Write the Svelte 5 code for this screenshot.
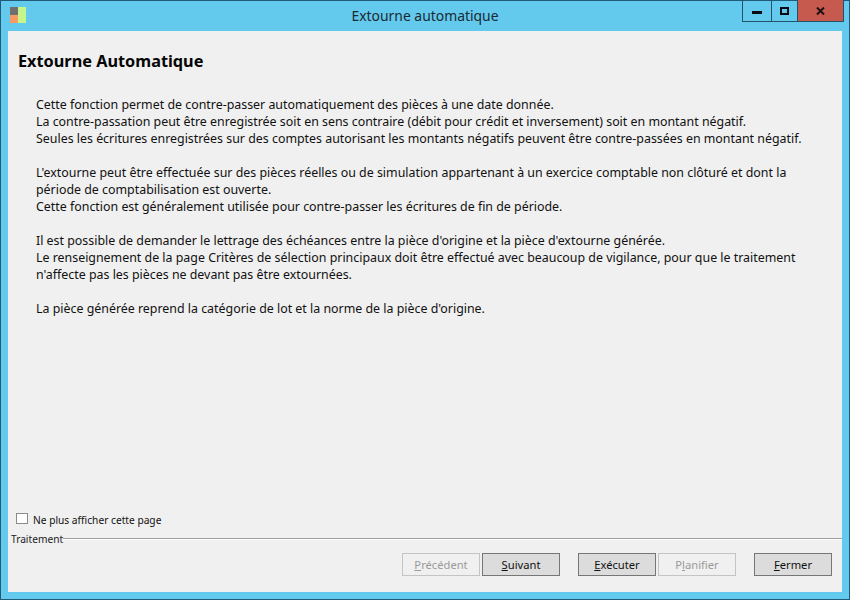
<script>
  const paragraphs = [
    [
      "Cette fonction permet de contre-passer automatiquement des pièces à une date donnée.",
      "La contre-passation peut être enregistrée soit en sens contraire (débit pour crédit et inversement) soit en montant négatif.",
      "Seules les écritures enregistrées sur des comptes autorisant les montants négatifs peuvent être contre-passées en montant négatif."
    ],
    [
      "L'extourne peut être effectuée sur des pièces réelles ou de simulation appartenant à un exercice comptable non clôturé et dont la",
      "période de comptabilisation est ouverte.",
      "Cette fonction est généralement utilisée pour contre-passer les écritures de fin de période."
    ],
    [
      "Il est possible de demander le lettrage des échéances entre la pièce d'origine et la pièce d'extourne générée.",
      "Le renseignement de la page Critères de sélection principaux doit être effectué avec beaucoup de vigilance, pour que le traitement",
      "n'affecte pas les pièces ne devant pas être extournées."
    ],
    ["La pièce générée reprend la catégorie de lot et la norme de la pièce d'origine."]
  ];
</script>

<div class="window">
  <header class="titlebar">
    <div class="appicon">
      <span class="grey"></span>
      <span class="green"></span>
      <span class="orange"></span>
    </div>
    <div class="title">Extourne automatique</div>
    <div class="controls">
      <div class="ctl min"><svg width="10" height="3"><rect width="10" height="3" fill="#0a0a14" /></svg></div>
      <div class="ctl max"><svg width="9" height="8"><rect x="1" y="1" width="7" height="6" fill="none" stroke="#0a0a14" stroke-width="2" /></svg></div>
      <div class="ctl close">
        <svg width="9" height="8" viewBox="0 0 9 8"><path d="M1 0.5 L8 7.5 M8 0.5 L1 7.5" stroke="#1c1010" stroke-width="2" fill="none" /></svg>
      </div>
    </div>
  </header>

  <main class="client">
    <section class="page">
      <h1>Extourne Automatique</h1>
      <div class="body">
        {#each paragraphs as lines}
          <p>
            {#each lines as line}
              <span class="line">{line}</span>
            {/each}
          </p>
        {/each}
      </div>
    </section>

    <label class="dontshow">
      <span class="box"></span>
      <span>Ne plus afficher cette page</span>
    </label>

    <div class="group">
      <span>Traitement</span>
      <div class="rule"></div>
    </div>

    <div class="actions">
      <button class="btn" disabled><u>P</u>récédent</button>
      <button class="btn"><u>S</u>uivant</button>
      <button class="btn sep"><u>E</u>xécuter</button>
      <button class="btn" disabled>P<u>l</u>anifier</button>
      <button class="btn sep"><u>F</u>ermer</button>
    </div>
  </main>
</div>

<style>
  :global(body) {
    margin: 0;
    background: #63c9ed;
  }

  .window {
    box-sizing: border-box;
    width: 850px;
    height: 600px;
    display: flex;
    flex-direction: column;
    background: #63c9ed;
    border: 1px solid #1f5a78;
    font-family: "Noto Sans", sans-serif;
    font-size: 12.4px;
    color: #111;
  }

  .titlebar {
    height: 30px;
    flex: none;
    display: flex;
    position: relative;
    justify-content: center;
  }

  .appicon {
    position: absolute;
    left: 9px;
    top: 6px;
    width: 16px;
    height: 16px;
    display: grid;
    grid-template-columns: 8px 8px;
    grid-template-rows: 8px 8px;
  }

  .grey { background: #6f6f70; }
  .orange { background: #f79a63; }
  .green {
    background: #c6f58c;
    grid-row: 1 / 3;
    grid-column: 2;
  }

  .title {
    font-size: 13.9px;
    line-height: 30px;
    color: #1a2a33;
  }

  .controls {
    position: absolute;
    top: -1px;
    right: 5px;
    height: 22px;
    display: flex;
    box-sizing: border-box;
    border: 1px solid #21516b;
    border-top: none;
  }

  .ctl {
    display: flex;
    align-items: center;
    justify-content: center;
    height: 21px;
  }

  .min { width: 28px; border-right: 1px solid #21516b; }
  .min svg { margin-top: 4px; }
  .max { width: 25px; border-right: 1px solid #21516b; }
  .close { width: 45px; background: #c75a4e; }

  .client {
    flex: 1;
    margin: 0 7px 7px;
    display: flex;
    flex-direction: column;
    background: #f0f0f0;
    min-height: 0;
  }

  .page {
    flex: 1;
    padding: 0 10px;
  }

  h1 {
    margin: 19px 0 0;
    font-size: 16.3px;
    line-height: 22px;
    font-weight: 700;
    color: #050505;
  }

  .body {
    margin: 24px 0 0 18px;
    line-height: 17px;
    white-space: nowrap;
  }

  p {
    margin: 0 0 17px;
  }

  .line {
    display: block;
  }

  .dontshow {
    display: flex;
    align-items: center;
    gap: 5px;
    margin: 0 0 1px 8px;
    height: 16px;
    font-size: 10.2px;
  }

  .box {
    box-sizing: border-box;
    width: 12px;
    height: 11px;
    margin-top: -3px;
    background: #fff;
    border: 1px solid #8a8a8a;
  }

  .group {
    margin: 3px 0 0 3px;
    display: flex;
    align-items: center;
    font-size: 10.2px;
    line-height: 14px;
    color: #222;
  }

  .rule {
    flex: 1;
    height: 1px;
    background: #a0a0a0;
    border-bottom: 1px solid #fff;
  }

  .actions {
    display: flex;
    justify-content: flex-end;
    gap: 2px;
    margin: 7px 10px 16px 0;
  }

  .btn {
    box-sizing: border-box;
    width: 78px;
    height: 23px;
    padding: 0;
    font: inherit;
    font-size: 11.2px;
    color: #111;
    background: #dcdcdc;
    border: 1px solid #767676;
  }

  .btn:disabled {
    color: #9a9a9a;
    background: #f0f0f0;
    border-color: #c4c4c4;
  }

  .sep {
    margin-left: 16px;
  }
</style>
